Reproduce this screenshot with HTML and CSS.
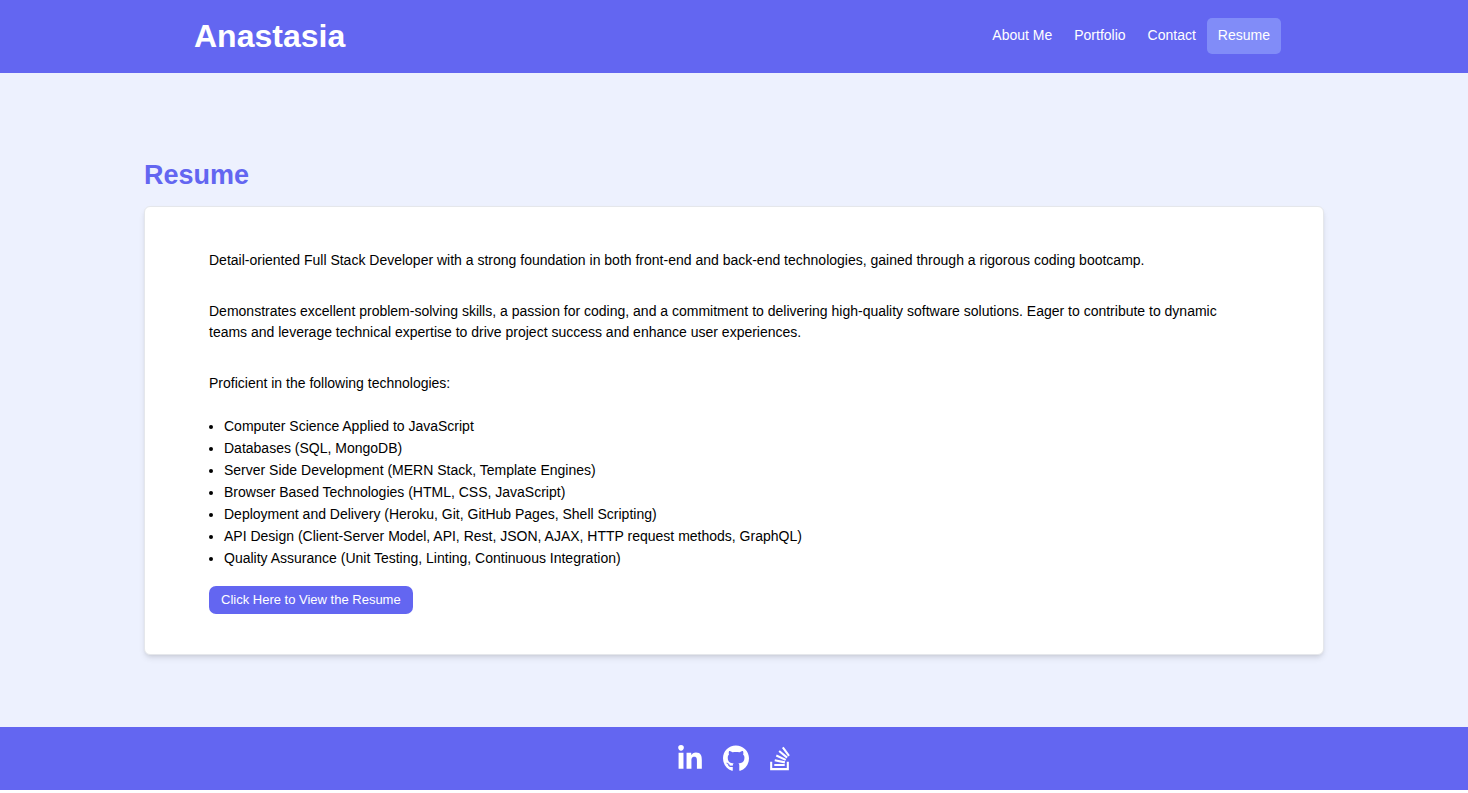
FILE: index.html
```html
<!DOCTYPE html>
<html lang="en">
<head>
<meta charset="utf-8">
<meta name="viewport" content="width=device-width, initial-scale=1">
<title>Anastasia | Resume</title>
<link rel="stylesheet" href="styles.css">
</head>
<body>
<header class="site-header">
  <h1 class="brand">Anastasia</h1>
  <nav class="nav" aria-label="Main">
    <a class="nav-link" href="#about">About Me</a>
    <a class="nav-link" href="#portfolio">Portfolio</a>
    <a class="nav-link" href="#contact">Contact</a>
    <a class="nav-link active" href="#resume" aria-current="page">Resume</a>
  </nav>
</header>
<main class="content">
  <h2 class="title">Resume</h2>
  <section class="card">
    <p class="text">Detail-oriented Full Stack Developer with a strong foundation in both front-end and back-end technologies, gained through a rigorous coding bootcamp.</p>
    <p class="text">Demonstrates excellent problem-solving skills, a passion for coding, and a commitment to delivering high-quality software solutions. Eager to contribute to dynamic teams and leverage technical expertise to drive project success and enhance user experiences.</p>
    <p class="text">Proficient in the following technologies:</p>
    <ul class="skills">
      <li>Computer Science Applied to JavaScript</li>
      <li>Databases (SQL, MongoDB)</li>
      <li>Server Side Development (MERN Stack, Template Engines)</li>
      <li>Browser Based Technologies (HTML, CSS, JavaScript)</li>
      <li>Deployment and Delivery (Heroku, Git, GitHub Pages, Shell Scripting)</li>
      <li>API Design (Client-Server Model, API, Rest, JSON, AJAX, HTTP request methods, GraphQL)</li>
      <li>Quality Assurance (Unit Testing, Linting, Continuous Integration)</li>
    </ul>
    <button class="view-button" type="button">Click Here to View the Resume</button>
  </section>
</main>
<footer class="site-footer">
  <a class="social" href="#linkedin" aria-label="LinkedIn"><svg viewBox="0 0 448 512" width="24" height="27" fill="currentColor"><path d="M100.28 448H7.4V148.9h92.88zM53.79 108.1C24.09 108.1 0 83.5 0 53.8a53.79 53.79 0 0 1 107.58 0c0 29.7-24.1 54.3-53.79 54.3zM447.9 448h-92.68V302.4c0-34.7-.7-79.2-48.29-79.2-48.29 0-55.69 37.7-55.69 76.7V448h-92.78V148.9h89.08v40.8h1.3c12.4-23.5 42.69-48.3 87.88-48.3 94 0 111.28 61.9 111.28 142.3V448z"/></svg></a>
  <a class="social" href="#github" aria-label="GitHub"><svg viewBox="0 0 496 512" width="26" height="27" fill="currentColor"><path d="M165.9 397.4c0 2-2.3 3.6-5.2 3.6-3.3.3-5.6-1.3-5.6-3.6 0-2 2.3-3.6 5.2-3.6 3-.3 5.6 1.3 5.6 3.6zm-31.1-4.5c-.7 2 1.3 4.3 4.3 4.9 2.6 1 5.6 0 6.2-2s-1.3-4.3-4.3-5.2c-2.6-.7-5.5.3-6.2 2.3zm44.2-1.7c-2.9.7-4.9 2.6-4.6 4.9.3 2 2.9 3.3 5.9 2.6 2.9-.7 4.9-2.6 4.6-4.6-.3-1.9-3-3.2-5.9-2.9zM244.8 8C106.1 8 0 113.3 0 252c0 110.9 69.8 205.8 169.5 239.2 12.8 2.3 17.3-5.6 17.3-12.1 0-6.2-.3-40.4-.3-61.4 0 0-70 15-84.7-29.8 0 0-11.4-29.1-27.8-36.6 0 0-22.9-15.7 1.6-15.4 0 0 24.9 2 38.6 25.8 21.9 38.6 58.6 27.5 72.9 20.9 2.3-16 8.8-27.1 16-33.7-55.9-6.2-112.3-14.3-112.3-110.5 0-27.5 7.6-41.3 23.6-58.9-2.6-6.5-11.1-33.3 2.6-67.9 20.9-6.5 69 27 69 27 20-5.6 41.5-8.5 62.8-8.5s42.8 2.9 62.8 8.5c0 0 48.1-33.6 69-27 13.7 34.7 5.2 61.4 2.6 67.9 16 17.7 25.8 31.5 25.8 58.9 0 96.5-58.9 104.2-114.8 110.5 9.2 7.9 17 22.9 17 46.4 0 33.7-.3 75.4-.3 83.6 0 6.5 4.6 14.4 17.3 12.1C428.2 457.8 496 362.9 496 252 496 113.3 383.5 8 244.8 8zM97.2 352.9c-1.3 1-1 3.3.7 5.2 1.6 1.6 3.9 2.3 5.2 1 1.3-1 1-3.3-.7-5.2-1.6-1.6-3.9-2.3-5.2-1zm-10.8-8.1c-.7 1.3.3 2.9 2.3 3.9 1.6 1 3.6.7 4.3-.7.7-1.3-.3-2.9-2.3-3.9-2-.6-3.6-.3-4.3.7zm32.4 35.6c-1.6 1.3-1 4.3 1.3 6.2 2.3 2.3 5.2 2.6 6.5 1 1.3-1.3.7-4.3-1.3-6.2-2.2-2.3-5.2-2.6-6.5-1zm-11.4-14.7c-1.6 1-1.6 3.6 0 5.9 1.6 2.3 4.3 3.3 5.6 2.3 1.6-1.3 1.6-3.9 0-6.2-1.4-2.3-4-3.3-5.6-2z"/></svg></a>
  <a class="social" href="#stackoverflow" aria-label="Stack Overflow"><svg viewBox="0 0 384 512" width="20" height="27" fill="currentColor"><path d="M290.7 311L95 269.7 86.8 309l195.7 41zm51-87L188.2 95.7l-25.5 30.8 153.5 128.3zm-31.2 39.7L129.2 179l-16.7 36.5L293.7 300zM262 32l-32 24 119.3 160.3 32-24zm20.5 328h-200v39.7h200zm39.7 80H42.7V320h-40v160h359.5V320h-40z"/></svg></a>
</footer>
</body>
</html>
```

FILE: styles.css
```css
* { box-sizing: border-box; }

body {
  margin: 0;
  background: #fff;
  color: #000;
  font: 14px/22px "Liberation Sans", Arial, sans-serif;
}

.site-header {
  display: flex;
  align-items: center;
  justify-content: space-between;
  padding: 18px 187px 19px 194px;
  background: #6366f1;
  color: #fff;
}

.brand { margin: 0; font-size: 32px; line-height: 36px; }

.nav { display: flex; }

.nav-link {
  padding: 6px 11px 8px;
  border-radius: 5px;
  color: #fff;
  text-decoration: none;
}

.nav-link.active { background: #818cf8; }

.content { padding: 84px 144px 72px; background: #edf1fe; }

.title {
  margin: 0 0 13px;
  color: #6366f1;
  font-size: 27px;
  line-height: 36px;
}

.card {
  padding: 43px 76px 40px 64px;
  border: 1px solid #e5e7eb;
  border-radius: 6px;
  background: #fff;
  box-shadow: 0 4px 6px -1px rgb(0 0 0 / 10%), 0 2px 4px -2px rgb(0 0 0 / 10%);
}

.text { margin: 0 0 30px; line-height: 21px; }

.skills { margin: -9px 0 17px; padding-left: 15px; }

.view-button {
  display: block;
  padding: 3px 12px;
  border: 0;
  border-radius: 7px;
  background: #6366f1;
  color: #fff;
  font: 13px/22px "Liberation Sans", Arial, sans-serif;
  cursor: pointer;
}

.site-footer {
  display: flex;
  align-items: center;
  justify-content: center;
  gap: 21px;
  padding: 18px 0;
  background: #6366f1;
}

.social { display: flex; color: #fff; }
```
